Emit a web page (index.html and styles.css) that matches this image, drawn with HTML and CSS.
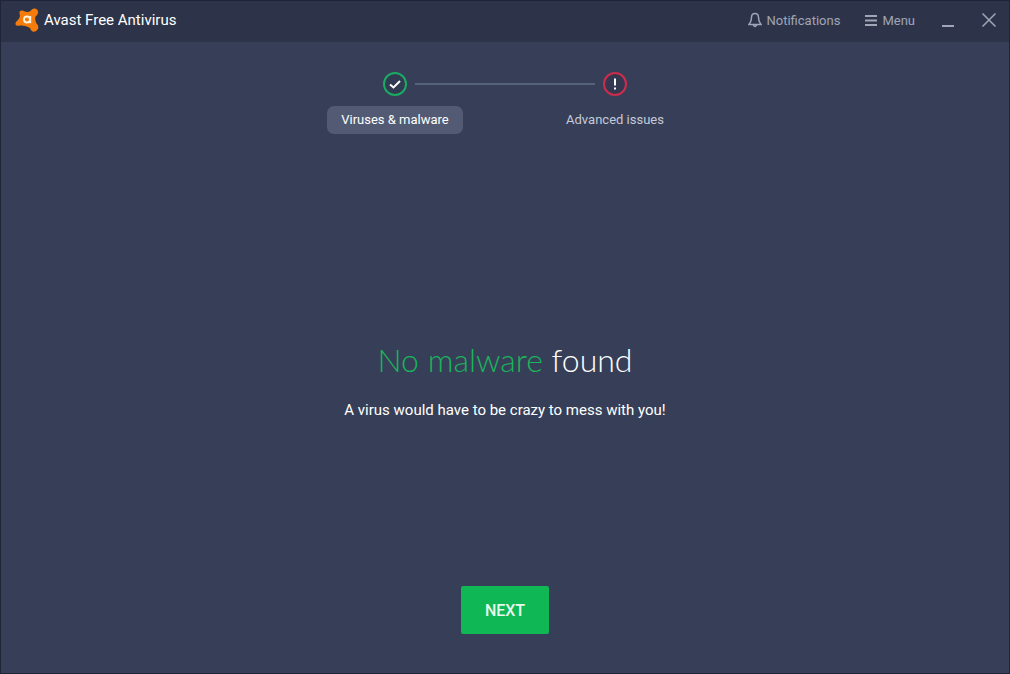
FILE: index.html
```html
<!DOCTYPE html>
<html lang="en">
<head>
    <meta charset="UTF-8">
    <meta name="viewport" content="width=device-width, initial-scale=1.0">
    <title>Avast Free Antivirus</title>
    <link rel="stylesheet" href="styles.css">
</head>
<body>

<div class="window">
    <header class="titlebar">
        <svg class="logo" viewBox="0 0 24 24" aria-hidden="true">
            <path d="M4.500 4 Q5 2 7.500 2.500 Q12 5 15.500 3 Q17 0 20 .5 Q23.500 1.500 23 5 Q22.500 7.500 20.500 8.500 Q19.500 12 21.500 15.500 Q24 17.500 23 21 Q21 24.500 17.500 23.500 Q15.500 22.500 15 20 Q11 17 5 17.500 Q1.500 18.500 .5 16.500 Q0 14 2.500 12.500 Q6 9.500 4.500 5.500 Z" fill="#f57c0a"/>
            <circle cx="12" cy="11.500" r="3" fill="none" stroke="#fff3df" stroke-width="1.800"/>
            <path d="M15.300 8 V15.200" stroke="#fff3df" stroke-width="1.800"/>
        </svg>
        <h1>Avast Free Antivirus</h1>
        <div class="actions">
            <button class="action" type="button">
                <svg class="bell" viewBox="0 0 14 16" aria-hidden="true">
                    <path d="M7 1.500 C4.500 1.500 3.500 3.500 3.500 5.500 C3.500 9.500 2.500 10.500 1 12.500 H13 C11.500 10.500 10.500 9.500 10.500 5.500 C10.500 3.500 9.500 1.500 7 1.500 Z M5.300 13 Q7 16 8.700 13"/>
                </svg>
                Notifications
            </button>
            <button class="action menu" type="button">
                <svg class="bars" viewBox="0 0 12 12" aria-hidden="true">
                    <path d="M0 2 H12 M0 6.500 H12 M0 11 H12"/>
                </svg>
                Menu
            </button>
            <button class="action control" type="button" aria-label="Minimize">
                <svg viewBox="0 0 16 16" aria-hidden="true"><path d="M2 14 H14" stroke-width="2"/></svg>
            </button>
            <button class="action control" type="button" aria-label="Close">
                <svg viewBox="0 0 16 16" aria-hidden="true"><path d="M1.500 1.500 L14.500 14.500 M14.500 1.500 L1.500 14.500"/></svg>
            </button>
        </div>
    </header>

    <main class="content">
        <ol class="steps">
            <li class="step">
                <svg class="step-icon ok" viewBox="0 0 24 24" aria-hidden="true">
                    <circle cx="12" cy="12" r="11"/>
                    <path d="M7 12.500 L10.500 15.500 L17 9"/>
                </svg>
                <span class="step-label active">Viruses &amp; malware</span>
            </li>
            <li class="step">
                <svg class="step-icon alert" viewBox="0 0 24 24" aria-hidden="true">
                    <circle cx="12" cy="12" r="11"/>
                    <path d="M12 6.500 V13.500 M12 15.500 V17.500"/>
                </svg>
                <span class="step-label">Advanced issues</span>
            </li>
        </ol>

        <section class="result">
            <h2><span class="good">No malware</span> found</h2>
            <p>A virus would have to be crazy to mess with you!</p>
        </section>

        <button class="next" type="button">NEXT</button>
    </main>
</div>

</body>
</html>
```
FILE: styles.css
```css
* {
    box-sizing: border-box;
}
body {
    margin: 0;
    font-family: Roboto, "Liberation Sans", sans-serif;
    color: #fff;
    background: #373f58;
}
button {
    font-family: inherit;
    border: 0;
    cursor: pointer;
}
.window {
    display: flex;
    flex-direction: column;
    min-height: 100vh;
    border: 1px solid #1f2439;
}

/* title bar */
.titlebar {
    display: flex;
    align-items: center;
    height: 41px;
    padding: 0 12px 3px 14px;
    background: #2d3449;
}
.logo {
    width: 24px;
    height: 24px;
    margin-right: 5px;
}
h1 {
    margin: 0;
    font-size: 15px;
    font-weight: 400;
}
.actions {
    display: flex;
    align-items: center;
    margin-left: auto;
}
.action {
    display: flex;
    align-items: center;
    gap: 5px;
    padding: 0;
    background: none;
    color: #a0a5b8;
    font-size: 13px;
}
.action svg {
    fill: none;
    stroke: currentColor;
    stroke-width: 1.5;
}
.bell {
    width: 14px;
    height: 16px;
}
.action .bars {
    width: 12px;
    height: 12px;
    stroke-width: 2;
}
.menu {
    margin-left: 25px;
}
.control {
    margin-left: 25px;
}
.control svg {
    width: 16px;
    height: 16px;
}

/* scan steps */
.content {
    flex: 1;
    display: flex;
    flex-direction: column;
    align-items: center;
    padding: 30px 20px 39px;
}
.steps {
    display: grid;
    grid-template-columns: 1fr 1fr;
    width: 100%;
    max-width: 440px;
    margin: 0;
    padding: 0;
    list-style: none;
}
.step {
    position: relative;
    display: flex;
    flex-direction: column;
    align-items: center;
    gap: 10px;
}
.step + .step::before {
    content: "";
    position: absolute;
    top: 11px;
    left: calc(-50% + 20px);
    right: calc(50% + 20px);
    height: 2px;
    background: #56617b;
}
.step-icon {
    width: 24px;
    height: 24px;
    fill: none;
    stroke: #fff;
    stroke-width: 2;
}
.ok circle {
    fill: #303a50;
    stroke: #1aab62;
}
.alert circle {
    fill: #333750;
    stroke: #cf2c4b;
}
.step-label {
    padding: 0 14px;
    border-radius: 7px;
    color: #c6cad6;
    font-size: 13px;
    line-height: 28px;
}
.step-label.active {
    background: #535b74;
    color: #fff;
}

/* result */
.result {
    margin: auto 0;
    padding-top: 40px;
    text-align: center;
}
h2 {
    margin: 0;
    font-family: Lato, sans-serif;
    font-size: 32px;
    font-weight: 300;
    line-height: 40px;
}
.good {
    color: #1ab45b;
}
p {
    margin: 20px 0 0;
    font-size: 15px;
    line-height: 20px;
}
.next {
    min-width: 88px;
    height: 48px;
    border-radius: 2px;
    background: #10b755;
    color: #e6f9ee;
    font-size: 16px;
    font-weight: 500;
}
```
